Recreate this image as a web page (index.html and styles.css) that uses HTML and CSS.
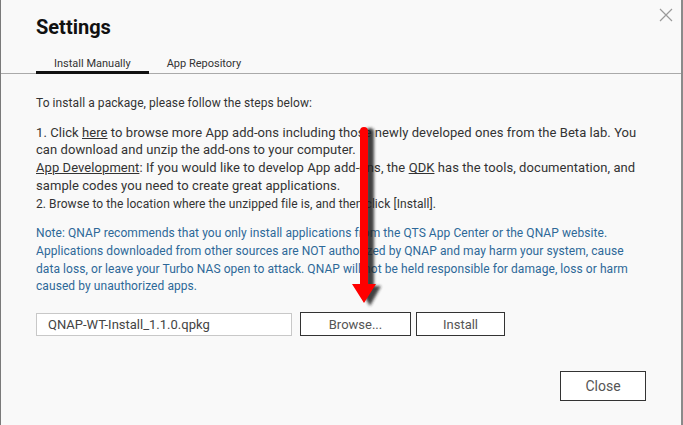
FILE: index.html
```html
<!DOCTYPE html>
<html>
<head>
<meta charset="utf-8">
<link rel="stylesheet" href="styles.css">
</head>
<body>
<div class="dialog">
  <h1 class="title">Settings</h1>
  <div class="tabs">
    <div class="tab active">Install Manually</div>
    <div class="tab">App Repository</div>
  </div>
  <div class="content">
    <p class="intro">To install a package, please follow the steps below:</p>
    <p class="steps">1. Click <u>here</u> to browse more App add-ons including those newly developed ones from the Beta lab. You can download and unzip the add-ons to your computer.<br><u>App Development</u>: If you would like to develop App add-ons, the <u>QDK</u> has the tools, documentation, and sample codes you need to create great applications.<br><span class="step2">2. Browse to the location where the unzipped file is, and then click [Install].</span></p>
    <p class="note">Note: QNAP recommends that you only install applications from the QTS App Center or the QNAP website. Applications downloaded from other sources are NOT authorized by QNAP and may harm your system, cause data loss, or leave your Turbo NAS open to attack. QNAP will not be held responsible for damage, loss or harm caused by unauthorized apps.</p>
    <div class="file-row">
      <div class="file-input">QNAP-WT-Install_1.1.0.qpkg</div>
      <button class="btn browse">Browse...</button>
      <button class="btn install">Install</button>
    </div>
  </div>
  <div class="footer">
    <button class="btn close">Close</button>
  </div>
  <svg class="close-x" width="14" height="14" viewBox="0 0 14 14"><path d="M1 1L13 13M13 1L1 13" stroke="#9a9a9a" stroke-width="1.2" fill="none"/></svg>
  <svg class="arrow" width="40" height="190" viewBox="0 0 40 190">
    <defs><filter id="sh" x="-50%" y="-10%" width="200%" height="120%"><feGaussianBlur stdDeviation="1.6"/></filter></defs>
    <g filter="url(#sh)" fill="#222" opacity="0.85">
      <path d="M13 8 a4 4 0 0 1 8 0 V162 H28 L17 182 L5 162 H13 Z" transform="translate(3,1)"/>
    </g>
    <path d="M10 8 a4 4 0 0 1 8 0 V161 H26 L14 180 L2 161 H10 Z" fill="#f00"/>
  </svg>
</div>
</body>
</html>
```

FILE: styles.css
```css
html, body {
  margin: 0;
  padding: 0;
  background: #e9e9e9;
}
.dialog {
  position: relative;
  box-sizing: border-box;
  width: 683px;
  height: 425px;
  background: #f9f9f9;
  border-left: 1px solid #7a7a7a;
  border-right: 2px solid #8a8a8a;
  display: flex;
  flex-direction: column;
  font-family: Roboto, "Liberation Sans", sans-serif;
  color: #333;
  overflow: hidden;
}
.title {
  margin: 0;
  padding: 14px 35px 0;
  font-size: 20px;
  font-weight: bold;
  line-height: 26px;
  color: #111;
}
.tabs {
  display: flex;
  margin-top: 17px;
  padding-left: 35px;
  border-bottom: 1px solid #aaa;
}
.tab {
  font-size: 11px;
  line-height: 14px;
  padding: 0 18px 2px;
  color: #333;
}
.tab.active {
  padding-bottom: 0;
  border-bottom: 3px solid #111;
  margin-bottom: -1px;
}
.content {
  padding: 21px 36px 0 35px;
  font-size: 13px;
  line-height: 17.6px;
}
.content p {
  margin: 0;
}
.intro {
  font-size: 12px;
  letter-spacing: 0.07px;
  margin-bottom: 11px !important;
}
.steps {
  letter-spacing: 0.07px;
  line-height: 17.75px;
  margin-bottom: 12px !important;
}
.step2 {
  font-size: 12px;
}
.note {
  font-size: 12px;
  letter-spacing: 0.07px;
  line-height: 17.67px;
  color: #2d6898;
}
.file-row {
  display: flex;
  align-items: center;
  margin-top: 16px;
}
.file-input {
  box-sizing: border-box;
  width: 256px;
  height: 23px;
  border: 1px solid #c8c8c8;
  background: #fff;
  padding-left: 11px;
  line-height: 21px;
  color: #444;
  font-size: 13px;
}
.btn {
  box-sizing: border-box;
  font-family: Roboto, "Liberation Sans", sans-serif;
  font-size: 13px;
  color: #555;
  background: #fff;
  border: 1px solid #333;
  border-radius: 0;
  padding: 0;
}
.browse {
  width: 111px;
  height: 24px;
  margin-left: 8px;
}
.install {
  width: 89px;
  height: 24px;
  margin-left: 5px;
}
.footer {
  margin-top: auto;
  display: flex;
  justify-content: flex-end;
  padding: 0 35px 24px;
}
.close {
  width: 86px;
  height: 30px;
  font-size: 14px;
}
.close-x {
  position: absolute;
  left: 658px;
  top: 8px;
}
.arrow {
  position: absolute;
  left: 349px;
  top: 123px;
}
```
